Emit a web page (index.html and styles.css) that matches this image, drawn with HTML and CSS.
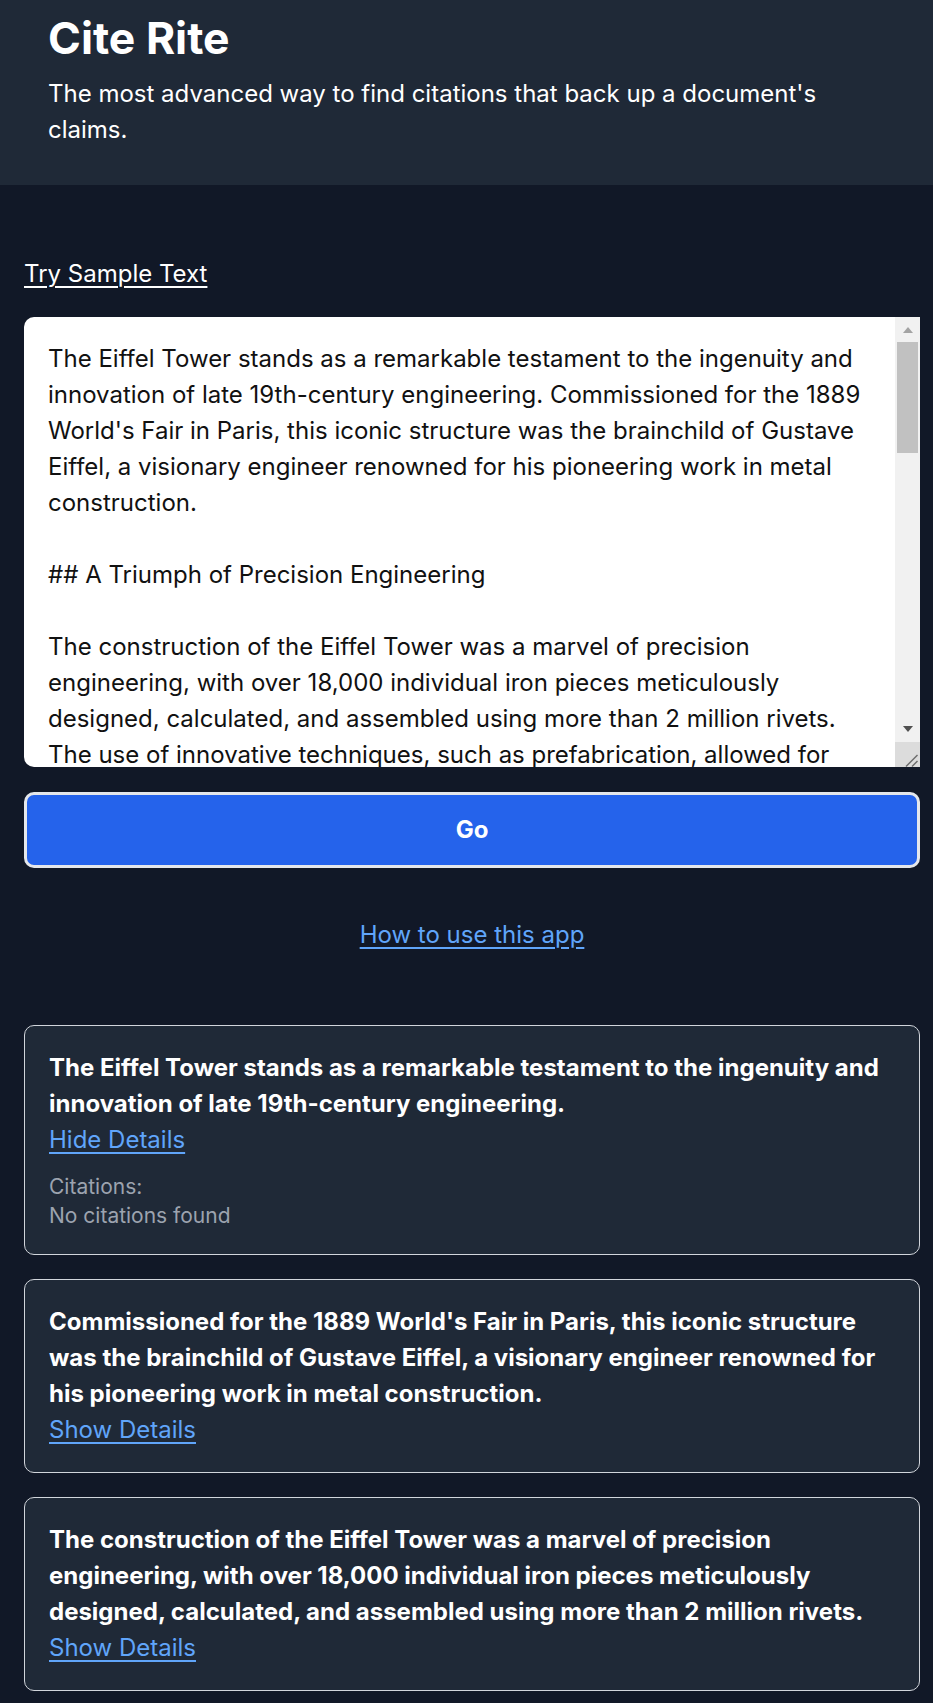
FILE: index.html
```html
<!DOCTYPE html>
<html lang="en">
<head>
<meta charset="utf-8">
<title>Cite Rite</title>
<link rel="stylesheet" href="styles.css">
</head>
<body>
<header class="site-header">
  <h1 class="title">Cite Rite</h1>
  <p class="tagline">The most advanced way to find citations that back up a document's claims.</p>
</header>
<main class="main">
  <div class="sample-row"><a class="sample-link" href="#">Try Sample Text</a></div>
  <div class="editor">
    <textarea class="doc-input" spellcheck="false">The Eiffel Tower stands as a remarkable testament to the ingenuity and innovation of late 19th-century engineering. Commissioned for the 1889 World's Fair in Paris, this iconic structure was the brainchild of Gustave Eiffel, a visionary engineer renowned for his pioneering work in metal construction.

## A Triumph of Precision Engineering

The construction of the Eiffel Tower was a marvel of precision engineering, with over 18,000 individual iron pieces meticulously designed, calculated, and assembled using more than 2 million rivets. The use of innovative techniques, such as prefabrication, allowed for the tower to be erected in just over two years, an astonishing feat for a structure of its size and complexity.

## Innovative Design and Structural Integrity

Eiffel's design was both aesthetically striking and structurally sound. The tower's distinctive lattice framework, composed of puddled iron, provided exceptional strength while minimizing wind resistance. Standing at 324 meters, it held the title of the world's tallest man-made structure for 41 years, until the completion of the Chrysler Building in New York in 1930.

## A Symbol of France

Initially criticized by some of France's leading artists and intellectuals, the Eiffel Tower has since become a global cultural icon of France and one of the most recognizable structures in the world.</textarea>
    <div class="scrollbar" aria-hidden="true">
      <div class="sb-button"><span class="arrow-up"></span></div>
      <div class="sb-track"><div class="sb-thumb"></div></div>
      <div class="sb-button"><span class="arrow-down"></span></div>
      <div class="sb-corner">
        <svg class="grip" width="25" height="25" viewBox="0 0 25 25">
          <line x1="11" y1="24.5" x2="22.5" y2="13" stroke="#6b6b6b" stroke-width="1.4"/>
          <line x1="17" y1="24.5" x2="22.5" y2="19" stroke="#6b6b6b" stroke-width="1.4"/>
        </svg>
      </div>
    </div>
  </div>
  <button class="go-btn" type="button">Go</button>
  <div class="howto-row"><a class="howto-link" href="#">How to use this app</a></div>
  <section class="results">
    <article class="claim-card">
      <p class="claim-text">The Eiffel Tower stands as a remarkable testament to the ingenuity and innovation of late 19th-century engineering.</p>
      <a class="details-link" href="#">Hide Details</a>
      <div class="citations">
        <p class="citations-label">Citations:</p>
        <p class="citations-empty">No citations found</p>
      </div>
    </article>
    <article class="claim-card">
      <p class="claim-text">Commissioned for the 1889 World's Fair in Paris, this iconic structure was the brainchild of Gustave Eiffel, a visionary engineer renowned for his pioneering work in metal construction.</p>
      <a class="details-link" href="#">Show Details</a>
    </article>
    <article class="claim-card">
      <p class="claim-text">The construction of the Eiffel Tower was a marvel of precision engineering, with over 18,000 individual iron pieces meticulously designed, calculated, and assembled using more than 2 million rivets.</p>
      <a class="details-link" href="#">Show Details</a>
    </article>
  </section>
</main>
</body>
</html>
```

FILE: styles.css
```css
html {
  background: #111827;
}

body {
  margin: 0;
  font-family: Inter, "Noto Sans", "Liberation Sans", sans-serif;
  color: #ffffff;
  background: #111827;
}

.site-header {
  background: #1f2937;
  padding: 14px 48px 37px 48px;
}

.title {
  margin: 0;
  font-size: 44.5px;
  line-height: 48px;
  font-weight: 700;
}

.tagline {
  margin: 14px 0 0 0;
  font-size: 24px;
  line-height: 36px;
  font-weight: 400;
}

.main {
  padding: 71px 13px 8px 24px;
  display: flex;
  flex-direction: column;
}

.sample-row {
  line-height: 36px;
  font-size: 24px;
  margin-bottom: 25px;
}

.sample-link {
  color: #ffffff;
  text-decoration: underline;
  text-underline-offset: 4px;
  text-decoration-thickness: 1.5px;
}

.editor {
  position: relative;
  height: 450px;
  margin-bottom: 25px;
}

.doc-input {
  display: block;
  box-sizing: border-box;
  width: 100%;
  height: 450px;
  margin: 0;
  padding: 24px 49px 24px 24px;
  border: none;
  border-radius: 10px;
  background: #ffffff;
  color: #111111;
  font-family: Inter, "Noto Sans", "Liberation Sans", sans-serif;
  font-size: 24px;
  line-height: 36px;
  resize: none;
  overflow: hidden;
  outline: none;
}

.scrollbar {
  position: absolute;
  top: 0;
  right: 0;
  bottom: 0;
  width: 25px;
  display: flex;
  flex-direction: column;
  background: #f1f1f1;
}

.sb-button {
  height: 25px;
  flex: none;
  display: flex;
  justify-content: center;
}

.arrow-up {
  margin-top: 10px;
  width: 0;
  height: 0;
  border-left: 5.5px solid transparent;
  border-right: 5.5px solid transparent;
  border-bottom: 6px solid #a3a3a3;
}

.arrow-down {
  margin-top: 9px;
  width: 0;
  height: 0;
  border-left: 5.5px solid transparent;
  border-right: 5.5px solid transparent;
  border-top: 6px solid #505050;
}

.sb-track {
  flex: 1;
  padding: 0 2px;
}

.sb-thumb {
  height: 111px;
  background: #c1c1c1;
}

.sb-corner {
  height: 25px;
  flex: none;
  background: #dcdcdc;
}

.grip {
  display: block;
}

.go-btn {
  display: block;
  width: 100%;
  box-sizing: border-box;
  height: 76px;
  margin: 0;
  padding: 0;
  border: 3px solid #e5e7eb;
  border-radius: 10px;
  background: #2563eb;
  color: #ffffff;
  font-family: Inter, "Noto Sans", "Liberation Sans", sans-serif;
  font-size: 24px;
  line-height: 36px;
  font-weight: 700;
  cursor: pointer;
}

.howto-row {
  margin-top: 49px;
  text-align: center;
  font-size: 24px;
  line-height: 36px;
}

.howto-link {
  color: #60a5fa;
  text-decoration: underline;
  text-underline-offset: 4px;
  text-decoration-thickness: 1.5px;
}

.results {
  margin-top: 72px;
  display: flex;
  flex-direction: column;
  gap: 24px;
}

.claim-card {
  background: #1f2937;
  border: 1px solid #d1d5db;
  border-radius: 10px;
  padding: 24px;
}

.claim-text {
  margin: 0;
  font-size: 24px;
  line-height: 36px;
  font-weight: 700;
  color: #ffffff;
}

.details-link {
  display: inline-block;
  font-size: 24px;
  line-height: 36px;
  color: #60a5fa;
  text-decoration: underline;
  text-underline-offset: 4px;
  text-decoration-thickness: 1.5px;
}

.citations {
  margin-top: 14px;
  color: #9ca3af;
  font-size: 21px;
  line-height: 29px;
}

.citations p {
  margin: 0;
}
```
